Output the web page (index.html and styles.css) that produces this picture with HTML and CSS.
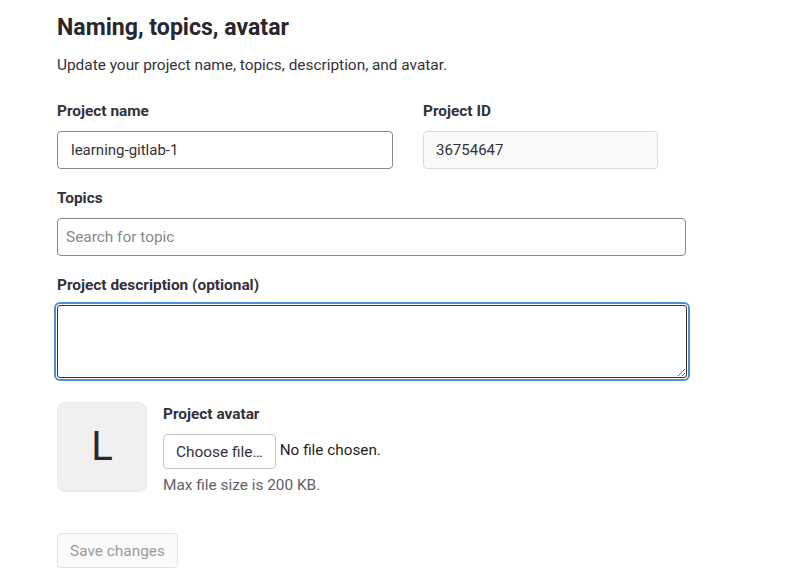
FILE: index.html
```html
<!DOCTYPE html>
<html lang="en">
<head>
<meta charset="utf-8">
<title>Naming, topics, avatar</title>
<link rel="stylesheet" href="styles.css">
</head>
<body>
<main class="page">
  <h2 class="title">Naming, topics, avatar</h2>
  <p class="subtitle">Update your project name, topics, description, and avatar.</p>

  <div class="row">
    <div class="field field-name">
      <label class="label" for="pname">Project name</label>
      <input id="pname" class="input" type="text" value="learning-gitlab-1">
    </div>
    <div class="field field-id">
      <label class="label" for="pid">Project ID</label>
      <input id="pid" class="input input-readonly" type="text" value="36754647" readonly>
    </div>
  </div>

  <div class="field field-wide">
    <label class="label" for="topics">Topics</label>
    <input id="topics" class="input input-placeholder" type="text" placeholder="Search for topic">
  </div>

  <div class="field field-wide">
    <label class="label" for="desc">Project description (optional)</label>
    <textarea id="desc" class="textarea textarea-focus"></textarea>
  </div>

  <div class="avatar-row">
    <div class="avatar">L</div>
    <div class="avatar-info">
      <div class="label">Project avatar</div>
      <div class="file-row">
        <button class="btn-file" type="button">Choose file…</button>
        <span class="file-status">No file chosen.</span>
      </div>
      <div class="help">Max file size is 200 KB.</div>
    </div>
  </div>

  <button class="btn-save" type="button" disabled>Save changes</button>
</main>
</body>
</html>
```
FILE: styles.css
```css
* { box-sizing: border-box; }
html, body { margin: 0; background: #fff; }
body {
  font-family: Roboto, "Liberation Sans", sans-serif;
  color: #333238;
  font-size: 15.4px;
  line-height: 20px;
}
.page {
  padding: 13px 0 0 57px;
  width: 700px;
}
.title {
  margin: 0;
  font-size: 23.1px;
  line-height: 30px;
  font-weight: 700;
  color: #28272d;
}
.subtitle {
  margin: 12px 0 0;
  color: #333238;
}
.row {
  display: flex;
  gap: 30px;
  margin-top: 26px;
}
.field { display: flex; flex-direction: column; }
.field-name { width: 336px; }
.field-id { width: 235px; }
.field-wide { width: 629px; margin-top: 19px; }
.label {
  font-weight: 700;
  color: #333238;
  line-height: 20px;
  margin-bottom: 10px;
}
.input {
  height: 38px;
  border: 1px solid #89888d;
  border-radius: 4px;
  padding: 0 13px;
  font-family: inherit;
  font-size: 15px;
  color: #333238;
  background: #fff;
  outline: none;
}
.input-readonly {
  background: #fafafa;
  border-color: #dcdcde;
  padding: 0 12px;
}
.input-placeholder { padding: 0 8px; font-size: 15.4px; }
.input-placeholder::placeholder { color: #89888d; }
.textarea {
  height: 73px;
  width: 630px;
  border: 1px solid #333;
  border-radius: 3px;
  font-family: inherit;
  font-size: 15px;
  resize: vertical;
  outline: none;
}
.textarea-focus {
  box-shadow: 0 0 0 1px #fff, 0 0 0 3px #4a90d9;
}
.avatar-row {
  display: flex;
  align-items: flex-start;
  gap: 16px;
  margin-top: 24px;
}
.avatar {
  width: 90px;
  height: 90px;
  border-radius: 8px;
  background: #f0f0f0;
  border: 1px solid #e9e9e9;
  display: flex;
  align-items: center;
  justify-content: center;
  font-size: 40px;
  font-weight: 400;
  color: #28272d;
}
.avatar-info { padding-top: 2px; }
.avatar-info .label { margin-bottom: 10px; }
.file-row { display: flex; align-items: flex-start; gap: 4px; }
.btn-file {
  height: 35px;
  padding: 0 12px;
  border: 1px solid #c4c4c4;
  border-radius: 4px;
  background: #fff;
  font-family: inherit;
  font-size: 15.4px;
  color: #333238;
}
.file-status {
  font-size: 15.3px;
  line-height: 20px;
  margin-top: 6px;
  color: #1f1e24;
}
.help {
  margin-top: 6px;
  color: #626168;
}
.btn-save {
  margin-top: 38px;
  height: 35px;
  padding: 0 12px;
  border: 1px solid #e4e4e4;
  border-radius: 4px;
  background: #fafafa;
  font-family: inherit;
  font-size: 15.4px;
  color: #9b9aa0;
}
```
